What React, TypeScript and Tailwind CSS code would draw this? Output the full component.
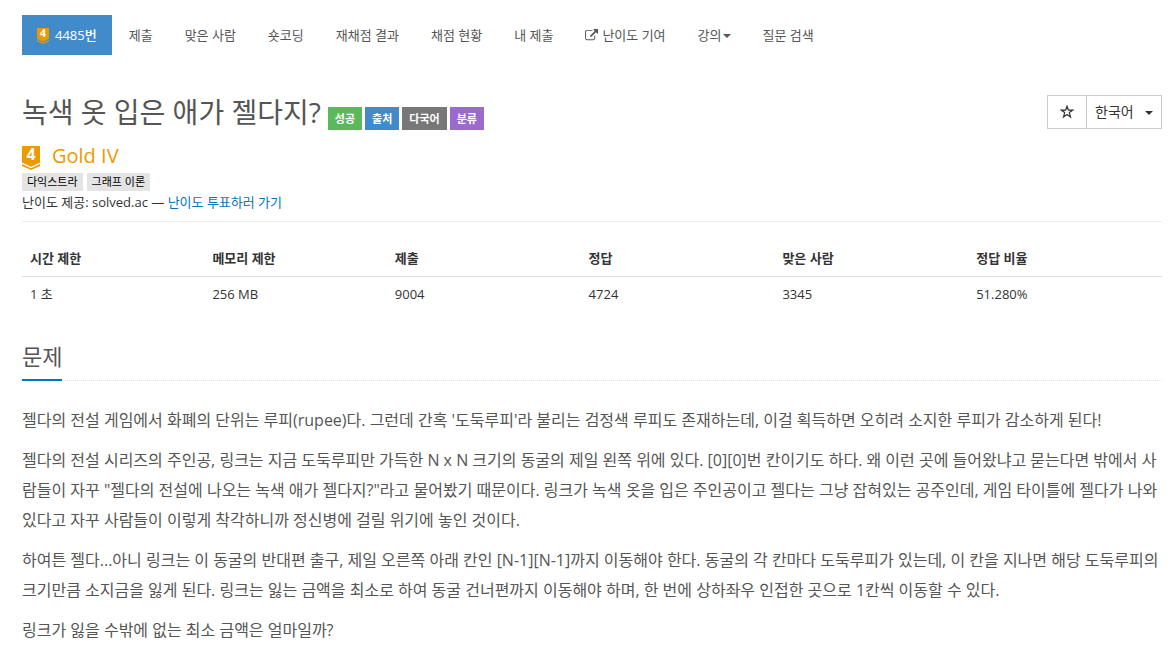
import React from "react";

function Tier({ className }: { className: string }) {
  return (
    <span className={"relative block " + className} aria-hidden="true">
      <svg viewBox="0 0 18 24" className="size-full overflow-visible">
        <path d="M0 0h18v16.500l-9 4.300-9-4.300z" fill="#ec9a00" />
        <path d="M0 18l9 4.300 9-4.300v1.900L9 24 0 19.900z" fill="#ec9a00" />
        <text x="9" y="14" textAnchor="middle" fontSize="16" fontWeight="700" fill="#fff">4</text>
      </svg>
    </span>
  );
}

function ExternalLink({ className }: { className: string }) {
  return (
    <svg viewBox="0 0 1792 1792" className={className} fill="currentColor" aria-hidden="true">
      <path d="M1408 928v320q0 119-84.500 203.500t-203.500 84.500h-832q-119 0-203.500-84.500t-84.500-203.500v-832q0-119 84.500-203.500t203.500-84.500h704q14 0 23 9t9 23v64q0 14-9 23t-23 9h-704q-66 0-113 47t-47 113v832q0 66 47 113t113 47h832q66 0 113-47t47-113v-320q0-14 9-23t23-9h64q14 0 23 9t9 23zm384-864v512q0 26-19 45t-45 19-45-19l-176-176-652 652q-10 10-23 10t-23-10l-114-114q-10-10-10-23t10-23l652-652-176-176q-19-19-19-45t19-45 45-19h512q26 0 45 19t19 45z" />
    </svg>
  );
}

function Star({ className }: { className: string }) {
  return (
    <svg viewBox="0 0 14 14" className={className} aria-hidden="true">
      <path d="M7 1.200l1.400 3.900h4.300L9.300 7.600l1.200 4.300L7 9.400l-3.500 2.500 1.200-4.300L1.300 5.100h4.300z" fill="none" stroke="currentColor" strokeWidth="1.200" />
    </svg>
  );
}

function Caret() {
  return <span className="mt-0.5 border-x-4 border-t-4 border-x-transparent" />;
}

const links = ["제출", "맞은 사람", "숏코딩", "재채점 결과", "채점 현황", "내 제출"];
const badges = [
  { text: "성공", color: "bg-[#5cb85c]" },
  { text: "출처", color: "bg-[#428bca]" },
  { text: "다국어", color: "bg-[#777777]" },
  { text: "분류", color: "bg-[#9b6bcc]" },
];
const stats = [
  ["시간 제한", "1 초", "w-[16%]"],
  ["메모리 제한", "256 MB", "w-[16%]"],
  ["제출", "9004", "w-[17%]"],
  ["정답", "4724", "w-[17%]"],
  ["맞은 사람", "3345", "w-[17%]"],
  ["정답 비율", "51.280%", "w-[17%]"],
];
const paragraphs = [
  "젤다의 전설 게임에서 화폐의 단위는 루피(rupee)다. 그런데 간혹 '도둑루피'라 불리는 검정색 루피도 존재하는데, 이걸 획득하면 오히려 소지한 루피가 감소하게 된다!",
  "젤다의 전설 시리즈의 주인공, 링크는 지금 도둑루피만 가득한 N x N 크기의 동굴의 제일 왼쪽 위에 있다. [0][0]번 칸이기도 하다. 왜 이런 곳에 들어왔냐고 묻는다면 밖에서 사람들이 자꾸 \"젤다의 전설에 나오는 녹색 애가 젤다지?\"라고 물어봤기 때문이다. 링크가 녹색 옷을 입은 주인공이고 젤다는 그냥 잡혀있는 공주인데, 게임 타이틀에 젤다가 나와있다고 자꾸 사람들이 이렇게 착각하니까 정신병에 걸릴 위기에 놓인 것이다.",
  "하여튼 젤다...아니 링크는 이 동굴의 반대편 출구, 제일 오른쪽 아래 칸인 [N-1][N-1]까지 이동해야 한다. 동굴의 각 칸마다 도둑루피가 있는데, 이 칸을 지나면 해당 도둑루피의 크기만큼 소지금을 잃게 된다. 링크는 잃는 금액을 최소로 하여 동굴 건너편까지 이동해야 하며, 한 번에 상하좌우 인접한 곳으로 1칸씩 이동할 수 있다.",
  "링크가 잃을 수밖에 없는 최소 금액은 얼마일까?",
];

export default function App() {
  return (
    <main className="pt-[15px] pr-[13px] pl-[22px] font-['Open_Sans','Noto_Sans_CJK_KR',sans-serif] text-[13px] leading-5 text-[#333333]">
      <nav className="flex h-10 items-stretch gap-0.5 text-[#555555]">
        <a href="#problem" className="flex items-center gap-1.5 bg-[#428bca] px-[15px] font-medium text-white">
          <Tier className="mt-0.5 h-4 w-3" />4485번
        </a>
        {links.map((t) => (
          <a key={t} href="#" className="flex items-center px-[15px]">{t}</a>
        ))}
        <a href="#" className="flex items-center gap-1 px-[15px]"><ExternalLink className="size-[13px]" />난이도 기여</a>
        <a href="#" className="flex items-center gap-px px-[15px]">강의<Caret /></a>
        <a href="#" className="flex items-center px-[15px]">질문 검색</a>
      </nav>
      <header className="mt-10 flex items-start justify-between">
        <div className="flex items-end gap-[3px]">
          <h1 className="mr-1 text-[28px] leading-[35px] text-[#555555]">녹색 옷 입은 애가 젤다지?</h1>
          {badges.map((b) => (
            <span key={b.text} className={"px-[7px] text-[11px] leading-[23px] font-bold text-white " + b.color}>{b.text}</span>
          ))}
        </div>
        <div className="flex h-[34px] border border-[#cccccc]">
          <button aria-label="즐겨찾기" className="flex w-[39px] items-center justify-center border-r border-[#cccccc]"><Star className="size-[14px]" /></button>
          <button className="flex w-[74px] items-center justify-between px-2 text-sm">한국어<Caret /></button>
        </div>
      </header>
      <div className="mt-3 flex h-7 items-center gap-3 text-xl text-[#ec9a00]"><Tier className="mt-1 h-6 w-[18px]" />Gold IV</div>
      <div className="mt-[3px] mb-px flex gap-1 text-[11px] leading-[18px] text-black">
        <span className="bg-[#e4e4e4] px-[5px]">다익스트라</span><span className="bg-[#e4e4e4] px-[5px]">그래프 이론</span>
      </div>
      <p>난이도 제공: solved.ac — <a href="#" className="text-[#0076c0]">난이도 투표하러 가기</a></p>
      <hr className="mt-[9px] border-[#eeeeee]" />
      <table className="mt-[19px] w-full text-left">
        <thead><tr className="border-b border-[#dddddd]">{stats.map((s) => <th key={s[0]} className={"h-[35px] px-2 font-bold " + s[2]}>{s[0]}</th>)}</tr></thead>
        <tbody><tr>{stats.map((s) => <td key={s[0]} className="h-9 px-2">{s[1]}</td>)}</tr></tbody>
      </table>
      <section id="problem">
        <div className="mt-7 flex border-b border-dotted border-[#e4e4e4]">
          <h2 className="-mb-px border-b-2 border-[#0076c0] pb-1.5 text-[22px] leading-[33px] text-[#555555]">문제</h2>
        </div>
        <div className="mt-6 flex flex-col gap-2.5 text-base leading-[30px] text-[#555555]">
          {paragraphs.map((p) => <p key={p}>{p}</p>)}
        </div>
      </section>
    </main>
  );
}
